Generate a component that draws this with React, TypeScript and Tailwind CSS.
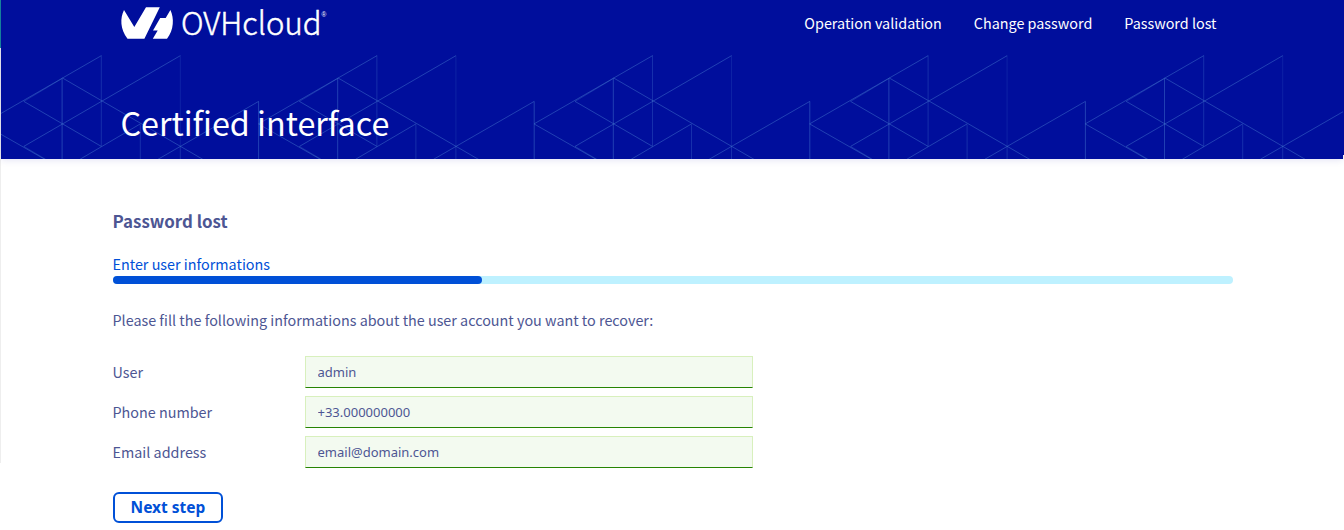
const tiles = [-275.6, 0, 275.6, 551.2, 826.8, 1102.4];

function Pattern() {
  return (
    <svg className="absolute inset-0 h-full w-full" viewBox="0 0 1342 159" preserveAspectRatio="none" fill="none" stroke="#4a7fd0" aria-hidden="true">
      {tiles.map((x) => (
        <g key={x} transform={`translate(${x - 1.2} 0.4)`} strokeOpacity="0.45">
          <path d="M-17 123.5 101.5 55.3M24 101 101.5 146M62.5 77.5 204 159.5M24 146 180.5 55.3M-17 123.5 46 159.5M80 159 140.5 123.5M158 159 258.8 101" />
          <path strokeOpacity="0.3" d="M24 101 62.5 78M24 146 46 159" />
          <path d="M62.3 78V159M258.8 101V159" />
          <path strokeOpacity="0.3" d="M101.5 55V146M140.5 124V159M180.5 146V159" />
          <path strokeOpacity="0.18" d="M180.5 55V146" />
        </g>
      ))}
    </svg>
  );
}

function Logo() {
  return (
    <svg className="h-11 w-[212px] overflow-visible" viewBox="120 0 212 44" fill="white" role="img" aria-label="OVHcloud">
      <path d="M124 10C120 18 120 29 127.500 38.800H144.400L159.800 7.200H146L134.300 27Z" />
      <path d="M170.400 10C174.300 18 174 30 167 38.800H152.800L157.700 30.500H153L160.200 18H165.700Z" />
      <text x="181" y="35.300" className="font-['Noto_Sans_CJK_SC',sans-serif] font-light" fontSize="32" stroke="white" strokeWidth="0.5" textLength="140.500" lengthAdjust="spacingAndGlyphs">OVHcloud</text>
      <text x="321.600" y="17" className="font-['Liberation_Sans',sans-serif]" fontSize="6.500">®</text>
    </svg>
  );
}

const links = ["Operation validation", "Change password", "Password lost"];
const fields = [
  { label: "User", value: "admin" },
  { label: "Phone number", value: "+33.000000000" },
  { label: "Email address", value: "email@domain.com" },
];

export default function App() {
  return (
    <div className="relative h-[530px] overflow-hidden bg-white pl-px font-['Noto_Sans_CJK_SC',sans-serif] text-[14.370px] text-[#4d5693]">
      <div className="absolute top-0 left-0 h-12 w-px bg-[#16899c]" />
      <div className="absolute top-12 left-0 h-[415px] w-px bg-[#eeeeee]" />
      <div className="absolute top-0 right-0 h-[155px] w-px bg-[#000e9c]" />
      <header className="relative mr-px h-[159px] bg-[#000e9c] text-white shadow-[0_0_8px_#000e9c26]">
        <Pattern />
        <div className="relative flex h-12 items-start justify-between pr-[126.500px] pl-[119px]">
          <Logo />
          <nav className="-ml-px flex h-[45px] items-center gap-8">
            {links.map((link) => <a key={link} href="#" className="leading-6">{link}</a>)}
          </nav>
        </div>
        <h1 className="relative mt-12 pl-[119.500px] text-[32.300px] leading-[52px]">Certified interface</h1>
      </header>
      <main className="px-28">
        <h2 className="-ml-[0.5px] mt-[50px] text-[16.900px] leading-6 font-bold">Password lost</h2>
        <p className="-ml-[0.5px] mt-[19px] leading-6 text-[#0050d7]">Enter user informations</p>
        <div className="h-2 w-[1120px] rounded-full bg-[#bef1ff]">
          <div className="h-full w-[369px] rounded-full bg-[#0050d7]" />
        </div>
        <p className="-ml-[0.5px] mt-6 leading-6">Please fill the following informations about the user account you want to recover:</p>
        <form className="mt-6">
          <div className="flex flex-col gap-2">
            {fields.map((f) => (
              <label key={f.label} className="flex h-8 items-center">
                <span className="-ml-[0.5px] w-[192.500px]">{f.label}</span>
                <input defaultValue={f.value} className="h-8 w-[448px] border border-[#d8f0bd] border-b-[#268403] bg-[#f3faf0] pr-3 pl-[11.500px] font-['Noto_Sans',sans-serif] text-[13px] outline-none" />
              </label>
            ))}
          </div>
          <button type="button" className="mt-6 flex h-[31px] w-[110px] items-center justify-center rounded-md border-2 border-[#0050d7] font-['Noto_Sans',sans-serif] text-[15.500px] font-bold text-[#0050d7]">Next step</button>
        </form>
      </main>
    </div>
  );
}
